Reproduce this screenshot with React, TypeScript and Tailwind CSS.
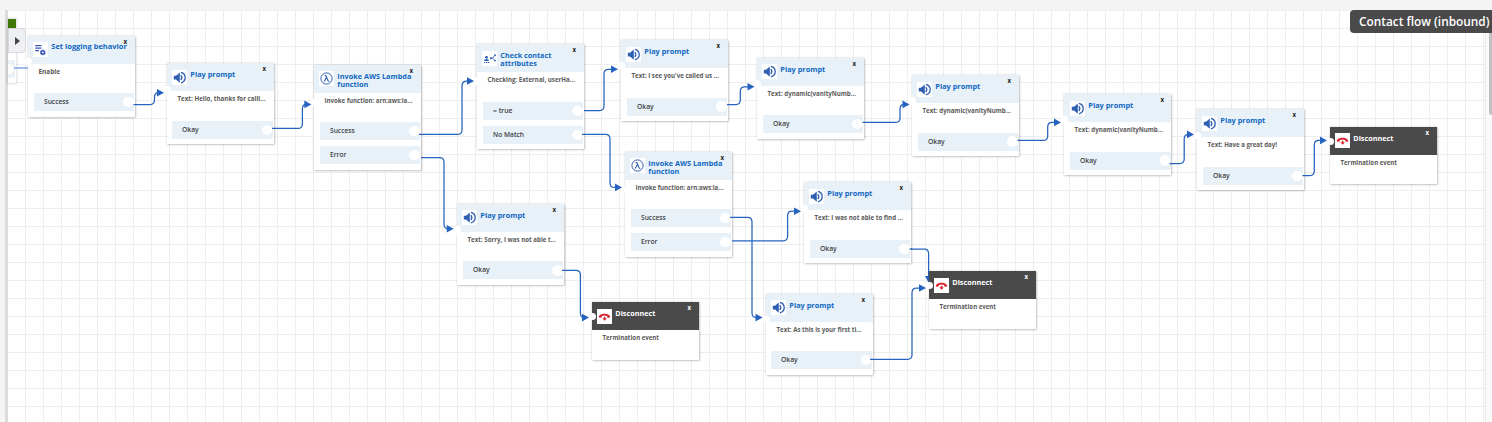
import React from "react";

type Kind = "log" | "play" | "lambda" | "check" | "disconnect";

interface FlowNode {
  kind: Kind;
  x: number;
  y: number;
  title: string[];
  titleWidth: number[];
  body: string;
  bodyWidth: number;
  rows: { label: string; width: number }[];
}

const OKAY = [{ label: "Okay", width: 16.7 }];
const RESULT = [
  { label: "Success", width: 24.7 },
  { label: "Error", width: 16.3 },
];

const play = (x: number, y: number, body: string, bodyWidth: number): FlowNode => ({
  kind: "play", x, y, title: ["Play prompt"], titleWidth: [45], body, bodyWidth, rows: OKAY,
});
const lambda = (x: number, y: number): FlowNode => ({
  kind: "lambda", x, y, title: ["Invoke AWS Lambda", "function"], titleWidth: [74, 31],
  body: "Invoke function: arn:aws:la...", bodyWidth: 88, rows: RESULT,
});
const disconnect = (x: number, y: number): FlowNode => ({
  kind: "disconnect", x, y, title: ["Disconnect"], titleWidth: [40], body: "Termination event", bodyWidth: 56.5, rows: [],
});

const nodes: FlowNode[] = [
  { kind: "log", x: 28, y: 35.6, title: ["Set logging behavior"], titleWidth: [75.5], body: "Enable", bodyWidth: 21.5, rows: [RESULT[0]] },
  play(166.7, 63.3, "Text: Hello, thanks for calli...", 88),
  lambda(314, 64.6),
  {
    kind: "check", x: 477, y: 44.3, title: ["Check contact", "attributes"], titleWidth: [51, 36.5],
    body: "Checking: External, userHa...", bodyWidth: 87.5,
    rows: [{ label: "= true", width: 19.5 }, { label: "No Match", width: 31 }],
  },
  play(621, 40, "Text: I see you've called us ...", 87.5),
  play(757, 57.6, "Text: dynamic(vanityNumb...", 88.5),
  play(912.2, 75, "Text: dynamic(vanityNumb...", 88.5),
  play(1064.4, 94, "Text: dynamic(vanityNumb...", 88.5),
  play(1197, 109.3, "Text: Have a great day!", 69.5),
  disconnect(1330, 126.6),
  lambda(625, 151.6),
  play(457, 203.8, "Text: Sorry, I was not able t...", 88.5),
  disconnect(592, 302),
  play(804, 182.3, "Text: I was not able to find ...", 88.5),
  play(765.7, 293.6, "Text: As this is your first ti...", 85),
  disconnect(928.8, 271),
];

// start x, start y, vertical segment x, end y, arrow tip x
const links: number[][] = [
  [133.5, 104.5, 154.5, 92.7, 164],
  [272, 128.4, 302.4, 104.4, 311.3],
  [419, 134.4, 462, 81, 474],
  [421, 157.6, 444, 228.8, 453.7],
  [584, 110.5, 604, 69.3, 618],
  [582, 134.4, 610, 187.4, 622],
  [727, 104.5, 740.3, 86.8, 754.5],
  [862.5, 122.4, 900, 104.4, 909.5],
  [1017.5, 140.4, 1047.7, 122.4, 1061],
  [1169.5, 163.6, 1184.2, 134.4, 1194],
  [1302.5, 175.6, 1314.3, 140.4, 1327],
  [562, 270.4, 580.4, 317.6, 589],
  [730, 217.4, 752, 317.6, 762.5],
  [732, 240.8, 787.6, 211.2, 801],
  [870, 359.3, 912, 288, 926],
];

function linkPath([sx, sy, mx, ey, tip]: number[]) {
  const r = 4.5;
  const d = ey > sy ? 1 : -1;
  return `M${sx} ${sy}H${mx - r}Q${mx} ${sy} ${mx} ${sy + d * r}V${ey - d * r}Q${mx} ${ey} ${Math.min(mx + r, tip - 5)} ${ey}H${tip - 4}`;
}

function Fit({ text, width, size, y, x = 0, fill, weight = 700 }: { text: string; width: number; size: number; y: number; x?: number; fill: string; weight?: number }) {
  return (
    <text x={x} y={y} textLength={width} lengthAdjust="spacingAndGlyphs" fontSize={size} fontWeight={weight} fill={fill}>
      {text}
    </text>
  );
}

function NodeIcon({ kind }: { kind: Kind }) {
  return (
    <svg viewBox="0 0 15 15" className="block h-[15px] w-[15px] bg-white" fill="none" stroke="#2f5fb3">
      {kind === "play" && (
        <>
          <path d="M1.8 5.7H4L7.8 2.4V12.8L4 9.5H1.8Z" fill="#2f5fb3" stroke="none" />
          <path d="M8.8 5.2Q10.8 7.6 8.8 10" strokeWidth="1.3" />
          <path d="M9 2.4C14.6 4 14.6 11.2 9 12.8" strokeWidth="1.3" />
        </>
      )}
      {kind === "lambda" && (
        <>
          <circle cx="7.5" cy="7.5" r="5.6" strokeWidth="1" />
          <path d="M5.7 4.6H6.8L9.3 10.3H10.2M7.4 6.5L5.2 10.5" strokeWidth="1.1" />
        </>
      )}
      {kind === "log" && (
        <>
          <path d="M2.2 3.6H8.4M2.2 6.1H8.4M2.2 8.6H6" stroke="#3b55bd" strokeWidth="1.1" />
          <circle cx="9.8" cy="10.4" r="1.7" stroke="#3b55bd" strokeWidth="1.6" />
          <path d="M9.8 7.6V8.5M9.8 12.3V13.2M7.3 9L8 9.4M11.6 11.4L12.3 11.8M12.3 9L11.6 9.4M8 11.4L7.3 11.8" stroke="#3b55bd" strokeWidth="1.2" />
        </>
      )}
      {kind === "check" && (
        <>
          <circle cx="4.5" cy="6.3" r="1.4" fill="#2f5fb3" stroke="none" />
          <path d="M2 9.9Q2 8.1 4.5 8.1T7 9.9Z" fill="#2f5fb3" stroke="none" />
          <path d="M2 11.5H7.4" strokeWidth="1.1" strokeDasharray="1.3 .7" />
          <path d="M8.4 7.2H10.6L12.8 4.4M10.6 7.2L12.8 9.4" strokeWidth=".9" />
          <circle cx="13" cy="4.2" r=".9" fill="#2f5fb3" stroke="none" />
          <circle cx="13" cy="9.6" r=".9" fill="#2f5fb3" stroke="none" />
          <circle cx="9" cy="7.2" r="1" fill="#2f5fb3" stroke="none" />
        </>
      )}
      {kind === "disconnect" && (
        <g fill="#d8232f" stroke="none">
          <path d="M1.8 8.5C1.6 3.5 13.4 3.5 13.2 8.5L10.5 8.7L10.1 6.9Q7.5 6 4.9 6.9L4.5 8.7Z" />
          <path d="M6.9 7.8H8.3V9.2H9.8L7.6 11.8L5.4 9.2H6.9Z" />
        </g>
      )}
    </svg>
  );
}

function Card({ node }: { node: FlowNode }) {
  const dark = node.kind === "disconnect";
  const notch = { play: 26, log: 26, lambda: 38, check: 36.5, disconnect: 14.7 }[node.kind];
  return (
    <div
      className="absolute flex w-[107px] flex-col bg-white shadow-[0_0_2px_rgba(0,0,0,0.18),1px_1px_2px_rgba(0,0,0,0.18)]"
      style={{ left: node.x, top: node.y }}
    >
      <header className={`flex h-7 gap-[3px] pl-[5.3px] pt-[6.7px] ${dark ? "bg-[#4a4a4a]" : "bg-[#e8f1f8]"}`}>
        <NodeIcon kind={node.kind} />
        <svg className="-mt-[6.7px] h-7 w-[83px] overflow-visible">
          {node.title.map((t, i) => (
            <Fit key={t} text={t} width={node.titleWidth[i]} size={7.8} x={0.3} y={(node.kind === "log" ? 13.2 : 13.7) + i * 8} fill={dark ? "#ffffff" : "#1168c2"} />
          ))}
          <text x="72.6" y="7.8" fontSize="6.1" fontWeight="700" fill={dark ? "#ffffff" : "#222222"}>x</text>
        </svg>
      </header>
      <svg className="h-[29.6px] w-full overflow-visible">
        <Fit text={node.body} width={node.bodyWidth} size={6.6} x={10.5} y={10.2} fill="#5a5a5a" />
      </svg>
      {node.rows.length > 0 && (
        <div className="flex flex-col gap-1.5 pb-[5.5px] pl-[5.6px] pr-[0.6px]">
          {node.rows.map((r) => (
            <div key={r.label} className="flex h-[18px] items-center justify-between bg-[#e8f1f8] pl-[10.1px] pr-[0.8px]">
              <svg className="h-[18px] w-10 overflow-visible">
                <Fit text={r.label} width={r.width} size={6.9} y={10.8} fill="#3c4044" weight={600} />
              </svg>
              <span className="h-[10.5px] w-[10.5px] rounded-full bg-white" />
            </div>
          ))}
        </div>
      )}
      <span className="absolute -left-[3.5px] h-[7.5px] w-[7.5px] rounded-full bg-white" style={{ top: notch - 3.75 }} />
    </div>
  );
}

export default function App() {
  return (
    <div className="relative flex h-[422px] w-[1492px] flex-col overflow-hidden bg-[#f4f4f4] font-['Open_Sans','Noto_Sans',sans-serif]">
      <div className="h-[10px] shrink-0" />
      <div className="flex flex-1 pl-[5px]">
        <div className="w-[3px] bg-[#dcdcdc]" />
        <main className="flex-1 bg-white bg-[linear-gradient(to_right,#eeeeee_1px,transparent_1px),linear-gradient(to_bottom,#eeeeee_1px,transparent_1px)] bg-[length:18px_18px] bg-[position:17px_0px]" />
        <div className="w-[7px] border-l border-[#e8e8e8] bg-[#fafafa] pl-[3px]">
          <div className="h-[105px] rounded-bl bg-[#c1c1c1]" />
        </div>
      </div>

      <div className="absolute left-2 top-[19px] h-[64px] w-2 bg-white shadow-[0_0_2px_1px_rgba(0,0,0,0.13)]">
        <div className="h-7 bg-[#417505]" />
        <div className="mt-[13px] h-[18px] w-[7px] bg-[#e8f1f8]">
          <div className="relative top-1 h-[10px] w-[6px] rounded-r-full bg-white" />
        </div>
      </div>
      <div className="absolute left-2 top-7 flex h-[25px] w-[18px] items-center justify-center rounded-r-sm border border-[#d8d9dc] bg-[#eff0f3]">
        <svg className="h-2 w-[5px]" viewBox="0 0 5 8"><path d="M0 0L5 4L0 8Z" fill="#444" /></svg>
      </div>

      <svg className="absolute inset-0 h-[422px] w-[1492px]" fill="none" stroke="#2563be" strokeWidth="1.25">
        <path d="M14 68H29" stroke="#86aee4" strokeWidth="1.6" />
        <path d="M911 249H924.3Q928.6 249 928.6 253.5V278" />
        <path d="M925 276H932.3L928.8 283Z" fill="#2563be" stroke="none" />
      </svg>

      {nodes.map((n) => <Card key={`${n.x}-${n.y}`} node={n} />)}

      <svg className="absolute inset-0 h-[422px] w-[1492px]" fill="none" stroke="#2563be" strokeWidth="1.25">
        <path d="M909.5 249H912" />
        {links.map((l) => (
          <g key={l.join()}>
            <path d={linkPath(l)} />
            <path d={`M${l[4] - 7} ${l[3] - 3.8}L${l[4]} ${l[3]}L${l[4] - 7} ${l[3] + 3.8}Z`} fill="#2563be" stroke="none" />
          </g>
        ))}
      </svg>

      <div className="absolute left-[1350px] top-[10px] h-[23px] w-[142px] rounded-l bg-[#4a4a4a]">
        <svg className="h-[23px] w-full overflow-visible">
          <Fit text="Contact flow (inbound)" width={130.5} size={13} x={9} y={16} fill="#ffffff" weight={600} />
        </svg>
      </div>
    </div>
  );
}
